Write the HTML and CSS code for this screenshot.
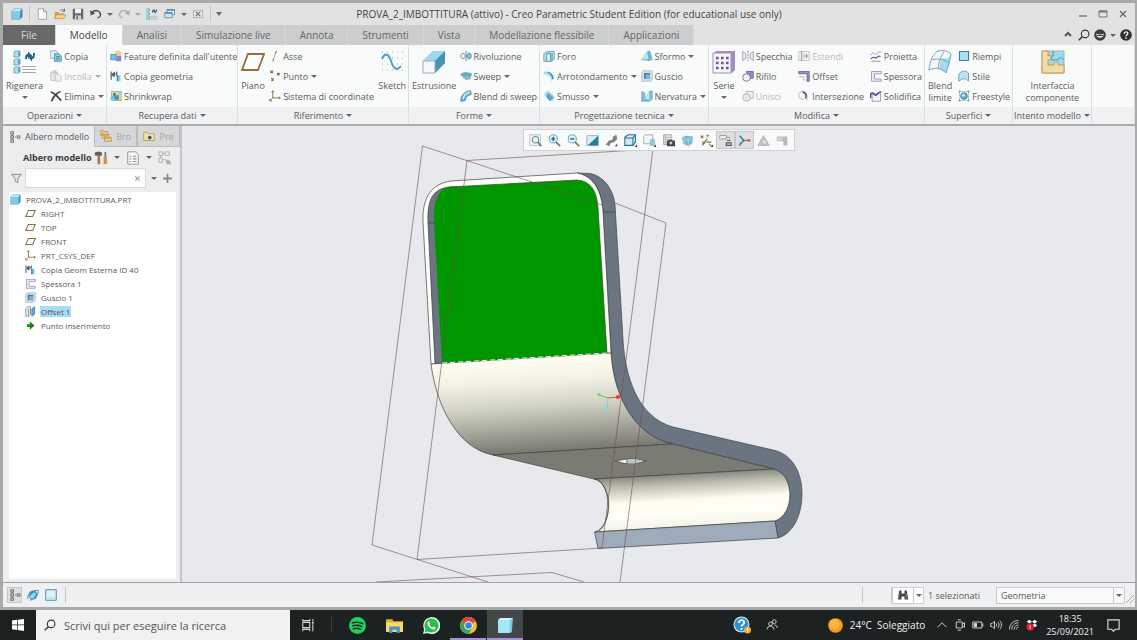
FILE: index.html
```html
<!DOCTYPE html>
<html lang="it">
<head>
  <meta charset="UTF-8">
  <meta name="viewport" content="width=device-width, initial-scale=1.0">
  <title>PROVA_2_IMBOTTITURA (attivo) - Creo Parametric</title>
  <link rel="stylesheet" href="styles.css">
</head>
<body>

  <!-- shared icons -->
  <svg class="sprite" aria-hidden="true">
    <symbol id="cube" viewBox="0 0 16 16">
      <path d="M1 4l3-3h11l-3 3z" fill="#c5eefa"/>
      <path d="M12 4l3-3v11l-3 3z" fill="#3f8fb5"/>
      <path d="M1 4h11v11H1z" fill="#7fcbe9"/>
      <path d="M1 4l3-3h11v11l-3 3H1z" fill="none" stroke="#4a9cc0" stroke-width=".7"/>
    </symbol>
    <symbol id="plane" viewBox="0 0 16 16">
      <path d="M5 3.500h10l-4 9H1z" fill="#fdfcf6" stroke="#857441" stroke-width="1.500"/>
    </symbol>
    <symbol id="csys" viewBox="0 0 16 16">
      <path d="M5 1v9.500h10M5 10.500L1 14.500M3.500 3L5 1l1.500 2M13 9l2 1.500L13 12M1 12v2.500h3" fill="none" stroke="#7d6c3c" stroke-width="1.200"/>
    </symbol>
    <symbol id="copygeom" viewBox="0 0 16 16">
      <path d="M1.500 2v11M9 2v6" stroke="#44566b" stroke-width="1.500"/>
      <path d="M3 5l3-2v6L3 7zM6 5h3" fill="#44566b" stroke="#44566b"/>
      <path d="M9 7h5v8H9z" fill="#7fd0ee"/><path d="M9 7h2v8H9z" fill="#3a87ad"/>
    </symbol>
    <symbol id="thick" viewBox="0 0 16 16">
      <path d="M2 2h13v3H6v7h9v3H2z" fill="#eee9f5" stroke="#8b83a4"/>
    </symbol>
    <symbol id="shell" viewBox="0 0 16 16">
      <path d="M1 3l2-2h12v12l-2 2H1z" fill="#d8dfe3" stroke="#9aa7af" stroke-width=".8"/>
      <path d="M4 4h8v8H4z" fill="#3c84a8"/><path d="M6 6h6v6H6z" fill="#6dbbdb"/>
    </symbol>
    <symbol id="tree" viewBox="0 0 16 16">
      <g fill="none" stroke="#666" stroke-width="1.200"><rect x="2.500" y="1" width="3.500" height="3"/><rect x="2.500" y="6.500" width="3.500" height="3"/><rect x="2.500" y="12" width="3.500" height="3"/><rect x="11" y="6.500" width="3.500" height="3"/><path d="M8 8h1.500M4.200 4v2.500M4.200 9.500V12"/></g>
    </symbol>
    <symbol id="lens" viewBox="0 0 16 16">
      <circle cx="9.500" cy="6.500" r="5" fill="none" stroke="currentColor" stroke-width="1.500"/>
      <path d="M6 10l-5 5" stroke="currentColor" stroke-width="1.800"/>
    </symbol>
    <symbol id="regen" viewBox="0 0 24 24">
      <g fill="#aee0f1" stroke="#5c9db8" stroke-width=".8">
        <path d="M1 2l1-1h5v5L6 7H1zM1 10l1-1h5v5l-1 1H1zM1 18l1-1h5v5l-1 1H1z"/>
      </g>
      <path d="M6 2v4M6 10v4M6 18v4" stroke="#2e6c87"/>
      <path d="M9 16.500h14M9 19.500h14M9 22.500h14" stroke="#a3a8ab" stroke-width="1.200"/>
      <path d="M12 9c0-4 1-5 3-5V1.500l4 4-4 3.500V6.500c-1 0-1 1-1 2.500z" fill="#236182"/>
      <path d="M22 3c0 4-1 6-3 6v2.500l-3-3.500 3-3v1.500c1 0 1-1 1-3.500z" fill="#236182"/>
    </symbol>
  </svg>

  <div class="window">
    <header class="titlebar">
      <div class="quick">
        <svg class="app-icon"><use href="#cube"/></svg>
        <span class="sep"></span>
        <button aria-label="Nuovo"><svg viewBox="0 0 16 16"><path d="M3 1h7l4 4v10H3z" fill="#fff" stroke="#8d8d8d"/><path d="M10 1v4h4" fill="#ddd" stroke="#8d8d8d"/></svg></button>
        <button aria-label="Apri"><svg viewBox="0 0 16 16"><path d="M1 5h5l1 2h6v7H1z" fill="#d5a44a"/><path d="M3 9h13l-3 5H1z" fill="#f6d58c" stroke="#a37a2c" stroke-width=".7"/><path d="M8 4c2-3 5-2 6 0M14 1v3.500h-3" fill="none" stroke="#3d7080" stroke-width="1.200"/></svg></button>
        <button aria-label="Salva"><svg viewBox="0 0 16 16"><path d="M1 1h14v14H1z" fill="#686868"/><path d="M4 1h8v6H4z" fill="#f3f3f3"/><path d="M4 10h8v5H4z" fill="#d9d9d9"/><path d="M6 11h2v4H6z" fill="#555"/></svg></button>
        <button aria-label="Annulla"><svg viewBox="0 0 16 16"><path d="M2 6c6-5 12-2 12 3 0 2-2 4-4 4" fill="none" stroke="#4c4c4c" stroke-width="1.800"/><path d="M0 3l1 7 6-3z" fill="#4c4c4c"/></svg></button>
        <span class="caret"></span>
        <button aria-label="Ripeti"><svg viewBox="0 0 16 16"><path d="M14 6C8 1 2 4 2 9c0 2 2 4 4 4" fill="none" stroke="#aaa" stroke-width="1.800"/><path d="M16 3l-1 7-6-3z" fill="#aaa"/></svg></button>
        <span class="caret off"></span>
        <button aria-label="Rigenera modello"><svg><use href="#regen"/></svg></button>
        <button aria-label="Finestre"><svg viewBox="0 0 16 16"><path d="M4 2h10v7H4z" fill="#e7f3f8" stroke="#4b7e96"/><path d="M1 6h10v7H1z" fill="#c9e8f4" stroke="#4b7e96"/><path d="M1 7h10M4 3h10" stroke="#4b7e96" stroke-width="1.500"/></svg></button>
        <span class="caret"></span>
        <button aria-label="Chiudi finestra"><svg viewBox="0 0 16 16"><path d="M2 3h12v10H2z" fill="#e9e9e9" stroke="#888" stroke-dasharray="3 1"/><path d="M5 5l6 6M11 5l-6 6" stroke="#777" stroke-width="1.500"/></svg></button>
        <span class="sep"></span>
        <span class="caret big"></span>
      </div>
      <h1>PROVA_2_IMBOTTITURA (attivo) - Creo Parametric Student Edition (for educational use only)</h1>
      <div class="win-buttons">
        <button aria-label="Riduci"><svg viewBox="0 0 10 10"><path d="M1 7h8" stroke="#666" stroke-width="1.200"/></svg></button>
        <button aria-label="Ingrandisci"><svg viewBox="0 0 10 10"><path d="M1 2h8v6H1z" fill="none" stroke="#777"/><path d="M1 2.500h8" stroke="#777" stroke-width="2"/></svg></button>
        <button aria-label="Chiudi"><svg viewBox="0 0 10 10"><path d="M2 2l6 6M8 2L2 8" stroke="#666" stroke-width="1.300"/></svg></button>
      </div>
    </header>

    <nav class="tabs">
      <button class="tab file">File</button>
      <button class="tab active">Modello</button>
      <button class="tab">Analisi</button>
      <button class="tab">Simulazione live</button>
      <button class="tab">Annota</button>
      <button class="tab">Strumenti</button>
      <button class="tab">Vista</button>
      <button class="tab">Modellazione flessibile</button>
      <button class="tab">Applicazioni</button>
      <div class="tab-tools">
        <button aria-label="Comprimi barra"><svg viewBox="0 0 12 12"><path d="M3 7l3-3 3 3" fill="none" stroke="#555" stroke-width="2"/></svg></button>
        <button aria-label="Cerca comando"><svg><use href="#lens"/></svg></button>
        <button aria-label="Account"><svg viewBox="0 0 12 12"><circle cx="6" cy="6" r="5.800" fill="#3d3d3d"/><path d="M2.500 4.500c2 1.200 5 1.200 7 0v2c-1 3-6 3-7 0z" fill="#e8e8e8"/><path d="M3 6.500h6" stroke="#3d3d3d"/></svg></button>
        <span class="caret"></span>
        <button aria-label="Guida"><svg viewBox="0 0 12 12"><circle cx="6" cy="6" r="5.800" fill="#2f2f2f"/><path d="M4.200 4.800c0-2.600 3.800-2.400 3.600-.2C7.700 5.800 6 5.800 6 7.300M6 8.300v1.400" fill="none" stroke="#fff" stroke-width="1.300"/></svg></button>
      </div>
    </nav>

    <section class="ribbon">
      <div class="group">
        <div class="group-body">
          <button class="large"><svg><use href="#regen"/></svg>Rigenera<span class="caret"></span></button>
          <div class="col">
            <button class="cmd"><svg viewBox="0 0 16 16"><path d="M1 1h7l2 2v8H1z" fill="#e7f5fa" stroke="#7a9eae"/><path d="M6 5h6l3 3v7H6z" fill="#8bd0e8" stroke="#3e7f9b"/><path d="M8 9h5M8 12h5" stroke="#28637e"/></svg>Copia</button>
            <button class="cmd" disabled><svg viewBox="0 0 16 16"><path d="M1 3h9v11H1zM4 1h4v3H4z" fill="#e5e5e5" stroke="#bbb"/><path d="M7 6h5l3 3v6H7z" fill="#f1f1f1" stroke="#bbb"/></svg>Incolla<span class="caret"></span></button>
            <button class="cmd"><svg viewBox="0 0 16 16"><path d="M1 3c3-1 9 6 14 11M14 2C10 3 4 9 2 15" fill="none" stroke="#444" stroke-width="2.400"/></svg>Elimina<span class="caret"></span></button>
          </div>
        </div>
        <button class="group-name">Operazioni<span class="caret"></span></button>
      </div>

      <div class="group">
        <div class="group-body">
          <div class="col">
            <button class="cmd"><svg viewBox="0 0 16 16"><circle cx="10.500" cy="5" r="4.500" fill="#f0cf86"/><path d="M1 6h7v7H1z" fill="#78c4e2" stroke="#4287a4"/><path d="M9 8h6v7H8z" fill="#8a83c7"/></svg>Feature definita dall'utente</button>
            <button class="cmd"><svg><use href="#copygeom"/></svg>Copia geometria</button>
            <button class="cmd"><svg viewBox="0 0 16 16"><path d="M2 2h13v12H5l-3-3z" fill="#f2d991" stroke="#b99a4b"/><path d="M4 4h4v3h4v6H4z" fill="#3e97bf"/><path d="M10 2h5v5h-3z" fill="#8ed4ec"/><path d="M1 8h4l3 6H1z" fill="#76bfdd"/></svg>Shrinkwrap</button>
          </div>
        </div>
        <button class="group-name">Recupera dati<span class="caret"></span></button>
      </div>

      <div class="group">
        <div class="group-body">
          <button class="large"><svg viewBox="0 0 24 24"><path d="M7 4h16l-6 16H1z" fill="#fff" stroke="#94703c" stroke-width="1.800"/></svg>Piano</button>
          <div class="col">
            <button class="cmd"><svg viewBox="0 0 16 16"><path d="M10 1L5 15" stroke="#8a7750" stroke-width="1.400" stroke-dasharray="5 1.500 2 1.500"/></svg>Asse</button>
            <button class="cmd"><svg viewBox="0 0 16 16"><path d="M2 1l3 3m0-3L2 4M11 4l3 3m0-3l-3 3M3 11l3 3m0-3l-3 3" stroke="#865f42" stroke-width="1.500"/></svg>Punto<span class="caret"></span></button>
            <button class="cmd"><svg><use href="#csys"/></svg>Sistema di coordinate</button>
          </div>
          <button class="large"><svg viewBox="0 0 24 24"><path d="M2 2h21M2 8h21M2 14h21M2 20h21" stroke="#a5a5a5" stroke-dasharray="1 4"/><path d="M2 9C5 2 9 4 11 11s6 11 10 5" fill="none" stroke="#4aa0cc" stroke-width="2"/></svg>Sketch</button>
        </div>
        <button class="group-name">Riferimento<span class="caret"></span></button>
      </div>

      <div class="group">
        <div class="group-body">
          <button class="large"><svg viewBox="0 0 24 24"><path d="M1 11L11 1h12v12L13 23z" fill="#5eb2d3"/><path d="M1 11L11 1h12L13 11z" fill="#9edaee"/><path d="M13 11L23 1v12L13 23z" fill="#4595b8"/><path d="M1 11h12v12H1z" fill="#f3f8fa" stroke="#9cafb8"/></svg>Estrusione</button>
          <div class="col">
            <button class="cmd"><svg viewBox="0 0 16 16"><ellipse cx="4" cy="8" rx="3" ry="3.500" fill="none" stroke="#46839c"/><ellipse cx="12" cy="8" rx="3" ry="4" fill="#7cc9e6" stroke="#3c84a5"/><path d="M8 1v14" stroke="#676767" stroke-dasharray="4 1"/></svg>Rivoluzione</button>
            <button class="cmd"><svg viewBox="0 0 16 16"><path d="M0 6c5-5 10-4 16-1l-2 7c-4 2-6 2-8 0z" fill="#94b9cc"/><path d="M0 6c5-3 10-3 16-1l-2 4c-3-2-6-1-8 0z" fill="#64a8c7"/></svg>Sweep<span class="caret"></span></button>
            <button class="cmd"><svg viewBox="0 0 16 16"><path d="M1 15C1 8 5 2 14 1l1 5c-5 1-7 3-8 8z" fill="#68b8d8" stroke="#367b98"/><path d="M4 12c1-5 4-8 9-9" fill="none" stroke="#d8f3fc" stroke-width="1.800"/></svg>Blend di sweep</button>
          </div>
        </div>
        <button class="group-name">Forme<span class="caret"></span></button>
      </div>

      <div class="group">
        <div class="group-body">
          <div class="col">
            <button class="cmd"><svg viewBox="0 0 16 16"><path d="M1 5l4-3h10v10l-3 3H1z" fill="#aadced" stroke="#5d9fb9"/><path d="M5 5h5v10H5z" fill="#e9f7fb" stroke="#3f7f99"/><path d="M12 4v10" stroke="#4c8aa3"/></svg>Foro</button>
            <button class="cmd"><svg viewBox="0 0 16 16"><path d="M1 2h6c5 1 8 5 8 10l-4 3C11 9 7 6 1 6z" fill="#a5dcee"/><path d="M6 3c4 1 7 4 7 9" fill="none" stroke="#3b89ab" stroke-width="1.700"/></svg>Arrotondamento<span class="caret"></span></button>
            <button class="cmd"><svg viewBox="0 0 16 16"><path d="M2 4l5-3 8 7v5l-4 2-9-8z" fill="#a9d8e7"/><path d="M7 4l7 6-5 5-5-6z" fill="#55a7c7"/></svg>Smusso<span class="caret"></span></button>
          </div>
          <div class="col">
            <button class="cmd"><svg viewBox="0 0 16 16"><path d="M1 12l7-10 4-1 3 10-4 4z" fill="#67b5d3"/><path d="M1 12l7-10 2 10-4 3z" fill="#b9e5f1"/><path d="M0 13h16" stroke="#8aa19e"/></svg>Sformo<span class="caret"></span></button>
            <button class="cmd"><svg><use href="#shell"/></svg>Guscio</button>
            <button class="cmd"><svg viewBox="0 0 16 16"><path d="M1 2l4 2v7l6-7V2l4-1v11l-4 3H1z" fill="#7dc3dd" stroke="#5296b1" stroke-width=".8"/><path d="M5 11l6-7v9z" fill="#c1e8f3"/></svg>Nervatura<span class="caret"></span></button>
          </div>
        </div>
        <button class="group-name">Progettazione tecnica<span class="caret"></span></button>
      </div>

      <div class="group">
        <div class="group-body">
          <button class="large"><svg viewBox="0 0 24 24"><path d="M2 3l2-2h19v19l-3 3H2z" fill="#a191c2"/><path d="M1 3h18v20H1z" fill="#f7f5fb" stroke="#9d90b8"/><path d="M4 8h13M4 13h13M4 18h13" stroke="#6a5596" stroke-width="2.400" stroke-dasharray="2.600 2.400"/></svg>Serie<span class="caret"></span></button>
          <div class="col">
            <button class="cmd"><svg viewBox="0 0 16 16"><path d="M1 2l4 3v6l-4 3zM15 2l-4 3v6l4 3z" fill="#f3f1f7" stroke="#8b819d"/><path d="M8 1v14" stroke="#777" stroke-dasharray="3 1"/></svg>Specchia</button>
            <button class="cmd"><svg viewBox="0 0 16 16"><path d="M6 2h9v9H9z" fill="#9c87ce" stroke="#66558f"/><circle cx="6" cy="10" r="5" fill="#f6f3fb" stroke="#615674"/></svg>Rifilo</button>
            <button class="cmd" disabled><svg viewBox="0 0 16 16"><path d="M6 2h9v9H6z" fill="#eee" stroke="#aaa"/><circle cx="6" cy="10" r="5" fill="#e6e6e6" stroke="#aaa"/></svg>Unisci</button>
          </div>
          <div class="col">
            <button class="cmd" disabled><svg viewBox="0 0 16 16"><path d="M1 2h14v12H1z" fill="#eee" stroke="#bbb"/><path d="M5 1v14M7 8h6M10 5l3 3-3 3" fill="none" stroke="#999" stroke-width="1.300"/></svg>Estendi</button>
            <button class="cmd"><svg viewBox="0 0 16 16"><path d="M1 5V2h14v13h-3V5z" fill="#9f8fc0" stroke="#675389"/><path d="M2 9h6v6" fill="none" stroke="#777" stroke-dasharray="2 1"/></svg>Offset</button>
            <button class="cmd"><svg viewBox="0 0 16 16"><circle cx="6.500" cy="7" r="5.500" fill="none" stroke="#aaa"/><path d="M6 3c4 0 6 4 4 8" fill="none" stroke="#4d3f76" stroke-width="2"/><path d="M12 8v6" stroke="#aaa"/></svg>Intersezione</button>
          </div>
          <div class="col">
            <button class="cmd"><svg viewBox="0 0 16 16"><path d="M1 7c4-7 5 1 8-2s4-3 6-2" fill="none" stroke="#888"/><path d="M1 12c4-5 6 0 8-2s4-2 5-1" fill="none" stroke="#6f5a9a" stroke-width="1.600"/><path d="M2 15h12" stroke="#777"/></svg>Proietta</button>
            <button class="cmd"><svg><use href="#thick"/></svg>Spessora</button>
            <button class="cmd"><svg viewBox="0 0 16 16"><path d="M3 5h11v10H3z" fill="#f5f2fa" stroke="#8d85a0"/><path d="M1 11V5c4-4 5 5 8 1s4-4 6-3" fill="none" stroke="#5d438e" stroke-width="2"/></svg>Solidifica</button>
          </div>
        </div>
        <button class="group-name">Modifica<span class="caret"></span></button>
      </div>

      <div class="group">
        <div class="group-body">
          <button class="large"><svg viewBox="0 0 24 24"><path d="M1 20C2 10 5 4 10 1h13c-1 8-3 15-5 22-4-5-10-6-17-3z" fill="#f2f8fa"/><path d="M13 9l8-1 2-5-2 12-3 8-7-4z" fill="#a0dced"/><path d="M1 20C2 10 5 4 10 1c6-1 10 0 13 3-1 7-3 13-5 19-4-5-10-6-17-3zM16 2c-4 5-5 10-6 17M4 10c6-2 12-1 17 3" fill="none" stroke="#7ba5b6"/></svg>Blend<br>limite</button>
          <div class="col">
            <button class="cmd"><svg viewBox="0 0 16 16"><path d="M2 2h12v12H2z" fill="#a9e0f3" stroke="#397f9e" stroke-width="1.400"/></svg>Riempi</button>
            <button class="cmd"><svg viewBox="0 0 16 16"><path d="M1 6c3-5 9-6 13-2v11c-4-5-8-4-13 0z" fill="#b9e4f1" stroke="#548ba0"/></svg>Stile</button>
            <button class="cmd"><svg viewBox="0 0 16 16"><path d="M2 2h12v12H2z" fill="none" stroke="#999" stroke-dasharray="2 1"/><circle cx="8" cy="8" r="4.500" fill="#56b1d1" stroke="#2f7c9a"/><circle cx="7" cy="7" r="2" fill="#c9f0fa"/><path d="M1 1h2v2H1zM13 1h2v2h-2zM1 13h2v2H1zM13 13h2v2h-2z" fill="#777"/></svg>Freestyle</button>
          </div>
        </div>
        <button class="group-name">Superfici<span class="caret"></span></button>
      </div>

      <div class="group">
        <div class="group-body center">
          <button class="large"><svg viewBox="0 0 24 24"><path d="M1 1h22v22H1z" fill="#9bdaf0" stroke="#a7b0a0"/><path d="M1 1h6v5c5-3 6 5 0 4v5h6c-1-4 6-4 4 0h6v8H1z" fill="#f2dca6" stroke="#b69a63"/><path d="M12 1v5c-3 0-3 4 0 4h5c1-3 4-3 6 0" fill="none" stroke="#4f94ab"/></svg>Interfaccia<br>componente</button>
        </div>
        <button class="group-name">Intento modello<span class="caret"></span></button>
      </div>

      <div class="group"><div class="group-body"></div><div class="group-name"></div></div>
    </section>

    <main class="workspace">
      <aside class="sidebar">
        <div class="side-tabs">
          <button class="side-tab active"><svg><use href="#tree"/></svg>Albero modello</button>
          <button class="side-tab"><svg viewBox="0 0 16 16"><g fill="#f2cf83" stroke="#aa803b" stroke-width=".8"><path d="M1 1h4l1 1h4v5H1zM3 5h4l1 1h4v5H3zM6 9h4l1 1h4v5H6z"/></g></svg><span class="fade">Bro</span></button>
          <button class="side-tab"><svg viewBox="0 0 16 16"><path d="M1 3h5l1 2h8v9H1z" fill="#f5e2a9" stroke="#a98b49"/><circle cx="9" cy="10" r="2.500" fill="#27617d"/></svg><span class="fade">Pre</span></button>
        </div>
        <div class="side-head">
          <h2>Albero modello</h2>
          <button aria-label="Impostazioni"><svg viewBox="0 0 16 16"><path d="M1 2c3-2 6-1 8 0v3H7v10H4V5H1z" fill="#a67a4d"/><path d="M1 2c3-2 6-1 8 0v3H1z" fill="#606060"/><path d="M12 1h2v7h-2z" fill="#777"/><path d="M11 7h4v8h-4z" fill="#d59442"/></svg></button>
          <span class="caret"></span>
          <button aria-label="Mostra"><svg viewBox="0 0 16 16"><path d="M2 1h9l3 3v11H2z" fill="#fff" stroke="#888"/><path d="M4 6h2M4 9h2M4 12h2M8 6h4M8 9h4M8 12h4" stroke="#888" stroke-width="1.200"/></svg></button>
          <span class="caret"></span>
          <button class="last" aria-label="Seleziona" disabled><svg viewBox="0 0 16 16"><path d="M1 1h4v4H1zM8 1h5v4H8zM1 8h4v5H1zM5 3h3M3 5v3M5 10h3" fill="none" stroke="#aaa"/><path d="M8 9l6 2 1 4h-5z" fill="#b0b0b0"/></svg></button>
        </div>
        <div class="filter">
          <svg viewBox="0 0 16 16"><path d="M1 2h14L10 8v6l-4-2V8z" fill="#e6e6e6" stroke="#777" stroke-width="1.200"/></svg>
          <div class="filter-box">
            <input type="text" aria-label="Filtro albero">
            <button aria-label="Cancella filtro"><svg viewBox="0 0 10 10"><path d="M3 3l4 4M7 3L3 7" stroke="#999"/></svg></button>
          </div>
          <span class="caret"></span>
          <button aria-label="Aggiungi"><svg viewBox="0 0 10 10"><path d="M5 1v8M1 5h8" stroke="#888" stroke-width="1.600"/></svg></button>
        </div>
        <ul class="model-tree">
          <li class="root"><svg><use href="#cube"/></svg><span>PROVA_2_IMBOTTITURA.PRT</span></li>
          <li><svg><use href="#plane"/></svg><span>RIGHT</span></li>
          <li><svg><use href="#plane"/></svg><span>TOP</span></li>
          <li><svg><use href="#plane"/></svg><span>FRONT</span></li>
          <li><svg><use href="#csys"/></svg><span>PRT_CSYS_DEF</span></li>
          <li><svg><use href="#copygeom"/></svg><span>Copia Geom Esterna ID 40</span></li>
          <li><svg><use href="#thick"/></svg><span>Spessora 1</span></li>
          <li><svg><use href="#shell"/></svg><span>Guscio 1</span></li>
          <li class="selected"><svg viewBox="0 0 16 16"><path d="M1 4l3-3h4v11l-3 3H1z" fill="#e6edf0" stroke="#6b7f88"/><path d="M5 4v11M8 4v8" stroke="#6b7f88"/><path d="M10 4l4-3v11l-4 3z" fill="#61aed0" stroke="#2f7593"/></svg><span>Offset 1</span></li>
          <li><svg viewBox="0 0 16 16"><path d="M3 6h4V2l7 6-7 6v-4H3z" fill="#168a12"/></svg><span>Punto inserimento</span></li>
        </ul>
      </aside>

      <div class="viewport">
        <svg class="model" viewBox="182 126 953 456" role="img" aria-label="Modello 3D">
          <defs>
            <linearGradient id="bend" gradientUnits="userSpaceOnUse" x1="520" y1="358" x2="526" y2="454">
              <stop offset="0" stop-color="#fffef2"/><stop offset=".25" stop-color="#f2f1e4"/>
              <stop offset=".5" stop-color="#d4d3c7"/><stop offset=".78" stop-color="#a1a096"/><stop offset="1" stop-color="#77766e"/>
            </linearGradient>
            <linearGradient id="roll" gradientUnits="userSpaceOnUse" x1="684" y1="473" x2="687" y2="527">
              <stop offset="0" stop-color="#85847b"/><stop offset=".2" stop-color="#bdbcae"/>
              <stop offset=".5" stop-color="#fdfcee"/><stop offset=".75" stop-color="#fffff8"/><stop offset="1" stop-color="#f3f2e4"/>
            </linearGradient>
          </defs>

          <!-- thickness seen from the side -->
          <path class="edge" fill="#6b7582" d="M577 173L590 173.500C603 176 613 188 615 205L623 340C625 375 637 417 673 427L773 450C793 454 802 474 802 493C802 517 792 534 778 538L775 521C795 514 795 475 774 469L673 444C637 437 614 400 611 353L603 212C602 192 594 176 577 173Z"/>
          <path class="edge" d="M604 212h11"/>
          <!-- front rim -->
          <path class="edge" fill="#fffffa" d="M431 364L423 222C422 198 431 184 451 181L577 173C594 176 602 192 603 212L611 353Z"/>
          <path class="edge" fill="#6b7582" d="M435 364L428 223C427 199 433 189 449 187L460 187L445 363Z"/>
          <path class="edge" d="M428 223h6"/>
          <path fill="#009600" d="M442 363L434 222C433 202 438 189 449 187L577 180C590 181 597 190 598 208L607 353Z"/>
          <path class="edge" d="M449 187L577 180C590 181 597 190 598 208L607 353"/>
          <!-- seat -->
          <path class="edge" fill="url(#bend)" d="M431 364L611 353C614 400 637 437 673 444L493 455C456 448 436 403 431 364Z"/>
          <path d="M442 363L607 353" stroke="#e8f5e2" stroke-dasharray="5 3"/>
          <path class="edge" fill="#7c7b73" d="M493 455L673 444L774 469L594 479Z"/>
          <path class="edge" fill="url(#roll)" d="M594 479L774 469C795 475 795 514 775 521L595 532C613 526 614 484 594 479Z"/>
          <path class="edge" fill="#9eabba" d="M594.500 532L775 521L778 538L598 548.500Z"/>
          <path class="edge" d="M597 479C611 487 612 522 599 531"/>
          <path class="edge" fill="#f3f5f7" d="M615 461L627 459H636L646 461L636 463.500H625Z"/>
          <path d="M627 459h9l7 2-8 2.500h-8z" fill="#bcc5ce"/>
          <path class="edge" d="M627 459v4.500"/>
          <!-- datum planes -->
          <path class="datum" d="M602 205L422.500 146L372 545L488 582M615 203L666 223L620 582"/>
          <path class="datum" d="M467 160.500L653 149L602 548L417 559.500Z"/>
          <path class="datum" d="M376 582L552 572.500L584 582"/>
          <!-- spin centre -->
          <path d="M608 398l10-1" stroke="#e84a3c"/><path d="M608 398l-9-3" stroke="#58c352"/><path d="M608 398l-1 11" stroke="#83ced1"/>
          <circle cx="618" cy="397" r="2" fill="#f03232"/><circle cx="599" cy="394.500" r="1.600" fill="#55e45a"/><circle cx="606" cy="410" r="1.800" fill="#7fdde2"/>
        </svg>

        <div class="view-bar">
          <button aria-label="Adatta"><svg viewBox="0 0 16 16"><path d="M1 1h13v13H1z" fill="#f4f8f8" stroke="#a3b9b5"/><circle cx="8" cy="7" r="4" fill="#dff2f6" stroke="#6e8e90" stroke-width="1.300"/><path d="M11 10l4 5" stroke="#777" stroke-width="2"/></svg></button>
          <button aria-label="Zoom avanti"><svg viewBox="0 0 16 16"><circle cx="6.500" cy="6" r="5" fill="#dff3fb" stroke="#6b9fb8" stroke-width="1.200"/><path d="M4 6h5M6.500 3.500v5" stroke="#1d6a94" stroke-width="1.800"/><path d="M10 10l5 5" stroke="#777" stroke-width="2"/></svg></button>
          <button aria-label="Zoom indietro"><svg viewBox="0 0 16 16"><circle cx="6.500" cy="6" r="5" fill="#dff3fb" stroke="#6b9fb8" stroke-width="1.200"/><path d="M4 6h5" stroke="#1d6a94" stroke-width="1.800"/><path d="M10 10l5 5" stroke="#777" stroke-width="2"/></svg></button>
          <button aria-label="Ridisegna"><svg viewBox="0 0 16 16"><path d="M1 2h14v12H1z" fill="#d8f1f8" stroke="#7eaabc"/><path d="M15 2v12H2z" fill="#267da3"/></svg></button>
          <button aria-label="Rendering"><svg viewBox="0 0 16 16"><path d="M1 13l4-5 4-1 1-4 4-2 1 5-4 4-4 1-2 4z" fill="#7b8186"/><path d="M15 12v3h-3z" fill="#333"/></svg></button>
          <button aria-label="Stile di visualizzazione"><svg viewBox="0 0 16 16"><path d="M1 4l4-3h9v9l-3 4H1z" fill="#d5eef6" stroke="#276f91" stroke-width="1.300"/><path d="M1 5h10v9M11 5l3-4" fill="none" stroke="#276f91" stroke-width="1.300"/><path d="M16 13v3h-3z" fill="#333"/></svg></button>
          <button aria-label="Viste salvate"><svg viewBox="0 0 16 16"><path d="M1 3l2-2h9v11H1z" fill="#f4f7f8" stroke="#98a4aa"/><path d="M9 7h5v7H9z" fill="#8dcbe0" stroke="#7fb2c3"/><path d="M16 13v3h-3z" fill="#333"/></svg></button>
          <button aria-label="Gestione viste"><svg viewBox="0 0 16 16"><path d="M2 1h10v12H2z" fill="#eee" stroke="#999"/><path d="M4 1v12M5 4h6M5 7h6" stroke="#999"/><path d="M6 8h2l1-1h3l1 1h3v7H6z" fill="#454545"/><circle cx="11" cy="11" r="1.800" fill="#ccc"/></svg></button>
          <button aria-label="Prospettiva"><svg viewBox="0 0 16 16"><path d="M1 4l5-2 9 1-1 8-5 4-6-3z" fill="#72b9d5"/><path d="M1 4l8 2 6-3M9 6v9M4 5v8M14 7L2 9" fill="none" stroke="#b4dbe9" stroke-width=".8"/></svg></button>
          <button aria-label="Riferimenti"><svg viewBox="0 0 16 16"><path d="M1 2l3 3m0-3L1 5M8 1l3 3m0-3L8 4M3 14L9 6M8 10h6M3 9l3 3m0-3l-3 3M11 12l3 3" stroke="#857647" stroke-width="1.300"/><path d="M16 13v3h-3z" fill="#333"/></svg></button>
          <button class="on" aria-label="Annotazioni"><svg viewBox="0 0 16 16"><path d="M1 2h8v4H1zM9 4h4v3" fill="#fff" stroke="#888"/><path d="M10 8h4M9 11h6v3H9z" fill="none" stroke="#555" stroke-width="1.400"/></svg></button>
          <button class="on" aria-label="Centro di rotazione"><svg viewBox="0 0 16 16"><path d="M2 2l5 6-5 5" fill="none" stroke="#287b95" stroke-width="1.700"/><path d="M7 8h6" stroke="#b45d5b" stroke-width="1.700"/><circle cx="13.500" cy="8" r="1.800" fill="#cc6767"/><circle cx="2.500" cy="13" r="1.500" fill="#3a9baf"/></svg></button>
          <button aria-label="Simulazione" disabled><svg viewBox="0 0 16 16"><path d="M8 2l7 12H1z" fill="#c7c7c7" stroke="#aaa"/><circle cx="9" cy="10" r="3" fill="#e2e2e2" stroke="#aaa"/></svg></button>
          <button aria-label="Pausa" disabled><svg viewBox="0 0 16 16"><path d="M1 3h13v11H9V9H1z" fill="#b9b9b9"/><path d="M2 4h6v4H2z" fill="#d2d2d2"/></svg></button>
        </div>
      </div>
    </main>

    <footer class="status">
      <button class="on" aria-label="Albero"><svg><use href="#tree"/></svg></button>
      <button aria-label="Browser"><svg viewBox="0 0 16 16"><circle cx="8" cy="8" r="6" fill="#4f9fc6"/><path d="M3 11l5-6 4 1-3 7z" fill="#9bd3e8"/><path d="M1 13C-1 9 10 0 15 2c2 3-6 12-11 13" fill="none" stroke="#397c9c" stroke-width="1.300"/></svg></button>
      <button aria-label="Schermo intero"><svg viewBox="0 0 16 16"><path d="M1 1h14v14H1z" fill="#dff2fa" stroke="#4c89a5" stroke-width="1.300"/><path d="M2 11h12v3H2z" fill="#bfe0ee"/></svg></button>
      <span class="sep"></span>
      <div class="status-right">
        <span class="sep"></span>
        <span class="sep far"></span>
        <div class="finder">
          <button aria-label="Trova"><svg viewBox="0 0 16 16"><path d="M3 2h3v4h4V2h3l2 12h-5v-4H6v4H1z" fill="#454545"/><path d="M3 6l-1 7M12 6l1 7" stroke="#999"/></svg></button>
          <button aria-label="Opzioni di ricerca"><span class="caret"></span></button>
        </div>
        <span class="count">1 selezionati</span>
        <div class="select-wrap">
          <select aria-label="Filtro di selezione"><option>Geometria</option></select>
          <span class="select-arrow"><span class="caret"></span></span>
        </div>
        <svg class="grip" viewBox="0 0 10 10"><path d="M1 9l8-8M5 9l4-4" stroke="#aaa"/></svg>
      </div>
    </footer>
  </div>

  <div class="taskbar">
    <button class="start" aria-label="Start"><svg viewBox="0 0 14 14"><path d="M1 2.500l5-.7v4.700H1zM6.700 1.700L13 1v5.500H6.700zM1 7.200h5V12l-5-.7zM6.700 7.200H13V13l-6.300-.9z" fill="#fff"/></svg></button>
    <label class="search">
      <svg><use href="#lens"/></svg>
      <input type="text" placeholder="Scrivi qui per eseguire la ricerca" aria-label="Cerca">
    </label>
    <button class="app" aria-label="Visualizzazione attività"><svg viewBox="0 0 16 16"><path d="M2 5h8v6H2zM2 1v2h8V1M2 15v-2h8v2M13.500 1v3M13.500 7v8" fill="none" stroke="#d5d5d5" stroke-width="1.200"/><path d="M12.500 4.500h2v2h-2z" fill="#ddd"/></svg></button>
    <span class="sep"></span>
    <div class="apps">
      <button class="app" aria-label="Spotify"><svg viewBox="0 0 16 16"><circle cx="8" cy="8" r="8" fill="#24cf61"/><path d="M3 5.500c4-1.200 7-.8 10 .8M3.500 8.300c3.500-1 6-.6 8.500.7M4 11c3-.7 5-.5 7 .6" fill="none" stroke="#15281b" stroke-width="1.400" stroke-linecap="round"/></svg></button>
      <button class="app" aria-label="Esplora file"><svg viewBox="0 0 16 16"><path d="M0 2h6l1 2h9v10H0z" fill="#e9ab2d"/><path d="M0 5h16v9H0z" fill="#fbd66b"/><path d="M3 9h10v6h-3v-3H6v3H3z" fill="#4795c7"/></svg></button>
      <button class="app" aria-label="WhatsApp"><svg viewBox="0 0 16 16"><path d="M0 16l1.200-4.200A8 8 0 1 1 4.300 15z" fill="#e9f8ec"/><path d="M1.500 14.500l.9-3A6.600 6.600 0 1 1 4.700 13.700z" fill="#28bd50"/><path d="M5.500 4l1.300 2-.8 1c.7 1.500 1.700 2.300 3 2.900l1-1 2 1.200c-.5 1.800-2 1.900-3.300 1.400C6.500 10.500 4.500 8.500 4.200 6c0-1 .5-1.700 1.300-2z" fill="#fff"/></svg></button>
      <button class="app open" aria-label="Chrome"><svg viewBox="0 0 16 16"><circle cx="8" cy="8" r="8" fill="#eac23c"/><path d="M8 8L1.100 4A8 8 0 0 1 14.900 4z" fill="#d94a3b"/><path d="M8 8L1.100 4A8 8 0 0 0 8 16l3.500-6z" fill="#3da457"/><circle cx="8" cy="8" r="4" fill="#fff"/><circle cx="8" cy="8" r="3.100" fill="#4285d8"/></svg></button>
      <button class="app open current" aria-label="Creo Parametric"><svg viewBox="0 0 16 16"><path d="M1 3l2-2h12l-1 13-2 1H1z" fill="#7cc7e0"/><path d="M1 3h11v12H1z" fill="#a7e6fa"/><path d="M1 3l2-2h12l-3 2z" fill="#d6f5fd"/></svg></button>
    </div>
    <div class="tray">
      <button class="help" aria-label="Assistenza"><svg viewBox="0 0 18 18"><circle cx="8.500" cy="8.500" r="8" fill="#e8f4fa"/><circle cx="8.500" cy="8.500" r="7" fill="#2b93cb"/><path d="M6 7c0-4 5.500-3.500 5.200-.3C11 8.500 8.500 8.500 8.500 10.500M8.500 12v2" fill="none" stroke="#fff" stroke-width="1.800"/><circle cx="14.500" cy="14" r="3.500" fill="#f1ad34"/><path d="M14.500 12v4" stroke="#fff"/></svg></button>
      <button class="people" aria-label="Contatti"><svg viewBox="0 0 16 16"><circle cx="6" cy="6.500" r="2.500"/><path d="M1.500 14c0-6 9-6 9 0"/><circle cx="11" cy="3.500" r="2.500"/><path d="M11 8c3 0 4 2 4 4"/></svg></button>
      <button class="weather"><svg viewBox="0 0 16 16"><circle cx="8" cy="8" r="7.800" fill="#f59c23"/><circle cx="7" cy="6.500" r="5.500" fill="#fbb73b"/></svg>24°C&nbsp; Soleggiato</button>
      <div class="tray-icons">
        <button aria-label="Icone nascoste"><svg viewBox="0 0 16 16"><path d="M2 11l6-6 6 6"/></svg></button>
        <button aria-label="Riunione"><svg viewBox="0 0 16 16"><path d="M3 4h8v8H3zM11 7l3-2v6l-3-2M5 1h4M5 15h4"/></svg></button>
        <button aria-label="Batteria"><svg viewBox="0 0 16 16"><path d="M1 4h12v8H1zM14.500 6v4"/><path d="M3 6h3v4H3z" fill="#ddd"/></svg></button>
        <button aria-label="Volume"><svg viewBox="0 0 16 16"><path d="M1 6h2l3-3v10l-3-3H1zM8 6c1 1 1 3 0 4M10.500 4c2 2 2 6 0 8M13 2c3 3 3 9 0 12"/></svg></button>
        <button aria-label="Rete"><svg viewBox="0 0 16 16"><path d="M2 14C2 7 7 2 14 2M5 14c0-5 4-9 9-9M8 14c0-3 3-6 6-6M11 14c0-2 1-3 3-3"/></svg></button>
        <button aria-label="Dropbox"><svg viewBox="0 0 16 16"><path d="M4.500 1L8 3.500 4.500 6 1 3.500zM11.500 1L15 3.500 11.500 6 8 3.500zM11.500 6L15 8.500 11.500 11 8 8.500z" fill="#fff" stroke="none"/><circle cx="5.500" cy="10.500" r="5" fill="#d8202e" stroke="none"/><path d="M5.500 8v5" stroke="#fff"/></svg></button>
      </div>
      <div class="clock"><span>18:35</span><span>25/09/2021</span></div>
      <button class="notes" aria-label="Notifiche"><svg viewBox="0 0 16 16"><path d="M2 2h12v10h-4l-2 2-2-2H2z"/></svg></button>
    </div>
  </div>

</body>
</html>
```
FILE: styles.css
```css
* {
  box-sizing: border-box;
}

body, html {
  margin: 0;
  padding: 0;
  height: 100%;
}

body {
  display: flex;
  flex-direction: column;
  overflow: hidden;
  font-family: "Open Sans", "Noto Sans", sans-serif;
  font-size: 9px;
  color: #5a5a5a;
}

button, input, select {
  font: inherit;
  color: inherit;
  border: none;
  margin: 0;
  padding: 0;
  background: none;
}

button {
  display: flex;
  align-items: center;
  justify-content: center;
  white-space: nowrap;
}

svg {
  display: block;
  flex: none;
  width: 12px;
  height: 12px;
}

h1, h2, ul {
  margin: 0;
  padding: 0;
}

.sprite {
  display: none;
}

.caret {
  flex: none;
  border: 3px solid transparent;
  border-top-color: #666;
  border-bottom: 0;
}

.caret.off {
  border-top-color: #aaa;
}

.caret.big {
  border-top-width: 4px;
}

.sep {
  flex: none;
  width: 1px;
  height: 16px;
  background: #c6c6c6;
}

.window {
  flex: 1;
  min-height: 0;
  display: flex;
  flex-direction: column;
  border: 3px solid #a9a9a9;
  border-right-width: 2px;
  background: #e2e2e2;
}

/* title bar */
.titlebar {
  display: grid;
  grid-template-columns: 1fr auto 1fr;
  align-items: center;
  height: 22px;
}

.titlebar h1 {
  font-size: 10px;
  font-weight: 400;
  color: #444;
}

.quick {
  display: flex;
  align-items: center;
  gap: 6px;
  padding-left: 8px;
}

.quick .caret {
  margin: 0 -1px;
}

.win-buttons {
  display: flex;
  justify-content: flex-end;
  gap: 10px;
  padding-right: 7px;
}

.win-buttons svg {
  width: 10px;
  height: 10px;
}

/* ribbon tabs */
.tabs {
  display: flex;
  height: 20px;
  font-size: 10px;
}

.tab {
  padding: 0 14px;
  background: #cbcdce;
  border-right: 1px solid #d6d8d9;
  color: #666;
}

.tab.file {
  padding: 0 18px;
  background: #686868;
  color: #d8d8d8;
}

.tab.active {
  background: #f8f9fa;
  color: #444;
}

.tab-tools {
  display: flex;
  align-items: center;
  gap: 4px;
  margin-left: auto;
  padding-right: 3px;
  color: #333;
}

/* ribbon */
.ribbon {
  display: grid;
  grid-template-columns: 104fr 131fr 171fr 131fr 169fr 216fr 88fr 79fr 43fr;
  height: 81px;
  border-bottom: 2px solid #ababab;
  background: #f9fafa;
}

.group {
  display: flex;
  flex-direction: column;
  min-width: 0;
  border-right: 1px solid #dcdfe1;
}

.group-body {
  flex: 1;
  display: flex;
  justify-content: space-between;
  padding: 1px 2px 0 3px;
}

.group-body.center {
  justify-content: center;
}

.group-name {
  height: 17px;
  gap: 3px;
  background: #eff1f2;
}

.large {
  flex-direction: column;
  justify-content: flex-start;
  padding-top: 4px;
  line-height: 12px;
  min-width: 24px;
}

.large svg {
  width: 24px;
  height: 24px;
  margin-bottom: 6px;
}

.large .caret {
  margin-top: 4px;
}

.cmd {
  height: 20px;
  gap: 2px;
  justify-content: flex-start;
}

.cmd .caret {
  margin-left: 1px;
}

.cmd:disabled {
  color: #b9b9b9;
}

.cmd:disabled .caret {
  border-top-color: #aaa;
}

/* workspace */
.workspace {
  flex: 1;
  min-height: 0;
  display: flex;
}

.sidebar {
  flex: none;
  width: 179px;
  display: flex;
  flex-direction: column;
  background: #ebedef;
  border-right: 2px solid #c2c4c6;
}

.side-tabs {
  display: flex;
  height: 21px;
}

.side-tab {
  flex: 1;
  gap: 4px;
  padding: 0 4px;
  background: #d5d7d9;
  border: 1px solid #b9bbbd;
  border-top: none;
}

.side-tab.active {
  flex: none;
  padding: 0 5px 0 6px;
  background: none;
  border: none;
}

.fade {
  color: #a5a5a5;
}

.side-head {
  display: flex;
  align-items: center;
  gap: 6px;
  height: 21px;
  padding-left: 20px;
}

.side-head h2 {
  font-size: 9px;
  font-weight: 700;
  color: #3c3c3c;
}

.side-head h2 + button {
  margin-left: -3px;
}

.side-head svg {
  width: 14px;
  height: 14px;
}

.filter {
  display: flex;
  align-items: center;
  gap: 5px;
  padding: 0 7px 0 8px;
}

.filter-box {
  flex: 1;
  display: flex;
  align-items: center;
  min-width: 0;
  height: 20px;
  margin-left: -2px;
  padding-right: 2px;
  background: #fff;
  border: 1px solid #d7d9db;
}

.filter-box input {
  flex: 1;
  min-width: 0;
}

.filter svg {
  width: 11px;
  height: 11px;
}

.model-tree {
  flex: 1;
  margin: 4px 4px 3px 6px;
  background: #fff;
  list-style: none;
  font-size: 8px;
}

.model-tree li {
  display: flex;
  align-items: center;
  gap: 4px;
  height: 14px;
  padding-left: 16px;
}

.model-tree li span {
  padding: 0 1px;
}

.model-tree .root {
  padding-left: 1px;
}

.model-tree svg {
  width: 11px;
  height: 11px;
}

.model-tree .selected span {
  background: #a6dcf7;
}

.viewport {
  flex: 1;
  position: relative;
  min-width: 0;
  background: #e8e9ed;
}

.model {
  width: 100%;
  height: 100%;
}

.edge {
  stroke: #3d4146;
  stroke-width: .7;
}

path.edge:not([fill]) {
  fill: none;
}

.datum {
  fill: none;
  stroke: #704c52;
  stroke-width: .6;
}

.view-bar {
  position: absolute;
  top: 3px;
  left: 50%;
  transform: translateX(-50%);
  display: flex;
  padding: 1px 2px;
  background: #f9fafa;
  border: 1px solid #cfd1d3;
}

.view-bar button {
  width: 19px;
  height: 18px;
}

.view-bar svg {
  width: 13px;
  height: 13px;
}

.view-bar .on, .status .on {
  background: #dedfe0;
  border: 1px solid #c6c7c8;
}

/* status bar */
.status {
  display: flex;
  align-items: center;
  gap: 3px;
  height: 25px;
  padding-left: 4px;
  background: #eff0f1;
  border-top: 1px solid #9fa0a2;
}

.status > button {
  width: 15px;
  height: 16px;
}

.status > .sep {
  margin-left: 4px;
}

.status-right {
  display: flex;
  align-items: center;
  margin-left: auto;
}

.sep.far {
  margin-left: 28px;
}

.finder {
  display: flex;
  height: 17px;
  background: #fff;
  border: 1px solid #d0d0d0;
}

.finder button {
  width: 20px;
}

.finder button:last-child {
  width: 10px;
  border-left: 1px solid #d0d0d0;
}

.count {
  width: 72px;
  padding-left: 4px;
}

.select-wrap {
  display: flex;
  width: 129px;
  height: 17px;
  background: #f8f9f9;
  border: 1px solid #c9cbcc;
}

.select-wrap select {
  flex: 1;
  appearance: none;
  padding-left: 4px;
}

.select-arrow {
  display: flex;
  align-items: center;
  justify-content: center;
  width: 11px;
  border-left: 1px solid #c9cbcc;
}

.grip {
  width: 10px;
  height: 10px;
  align-self: flex-end;
}

/* taskbar */
.taskbar {
  display: flex;
  height: 30px;
  background: #1c2121;
  color: #f0f0f0;
  font-size: 11px;
}

.start {
  width: 36px;
}

.start svg {
  width: 14px;
  height: 14px;
}

.search {
  display: flex;
  align-items: center;
  gap: 8px;
  width: 254px;
  padding: 0 8px;
  background: #f1f1f1;
  color: #333;
}

.search input {
  flex: 1;
  min-width: 0;
}

.search input::placeholder {
  color: #555;
  opacity: 1;
}

.app {
  width: 36px;
}

.app svg {
  width: 14px;
  height: 14px;
}

.taskbar .sep {
  align-self: center;
  margin: 0 7px 0 5px;
  background: #3b3f3f;
}

.apps {
  display: flex;
  gap: 1px;
}

.apps svg {
  width: 17px;
  height: 17px;
}

.app.open {
  border-bottom: 2px solid #a98fdc;
  padding-top: 2px;
}

.app.current {
  background: #434747;
}

.tray {
  display: flex;
  align-items: center;
  margin-left: auto;
  padding-right: 16px;
}

.tray button {
  fill: none;
  stroke: #ddd;
  stroke-width: 1.2;
}

.help svg {
  width: 18px;
  height: 18px;
}

.help svg, .weather svg {
  stroke: none;
}

.people {
  margin: 0 50px 0 15px;
}

.weather {
  gap: 7px;
  font-size: 10px;
}

.tray .weather {
  stroke: none;
}

.weather svg {
  width: 15px;
  height: 15px;
}

.tray-icons {
  display: flex;
  gap: 6px;
  margin: 0 8px 0 11px;
}

.clock {
  display: flex;
  flex-direction: column;
  align-items: center;
  margin-right: 12px;
  font-size: 9px;
  line-height: 13px;
}

.notes svg {
  width: 15px;
  height: 15px;
}
```
